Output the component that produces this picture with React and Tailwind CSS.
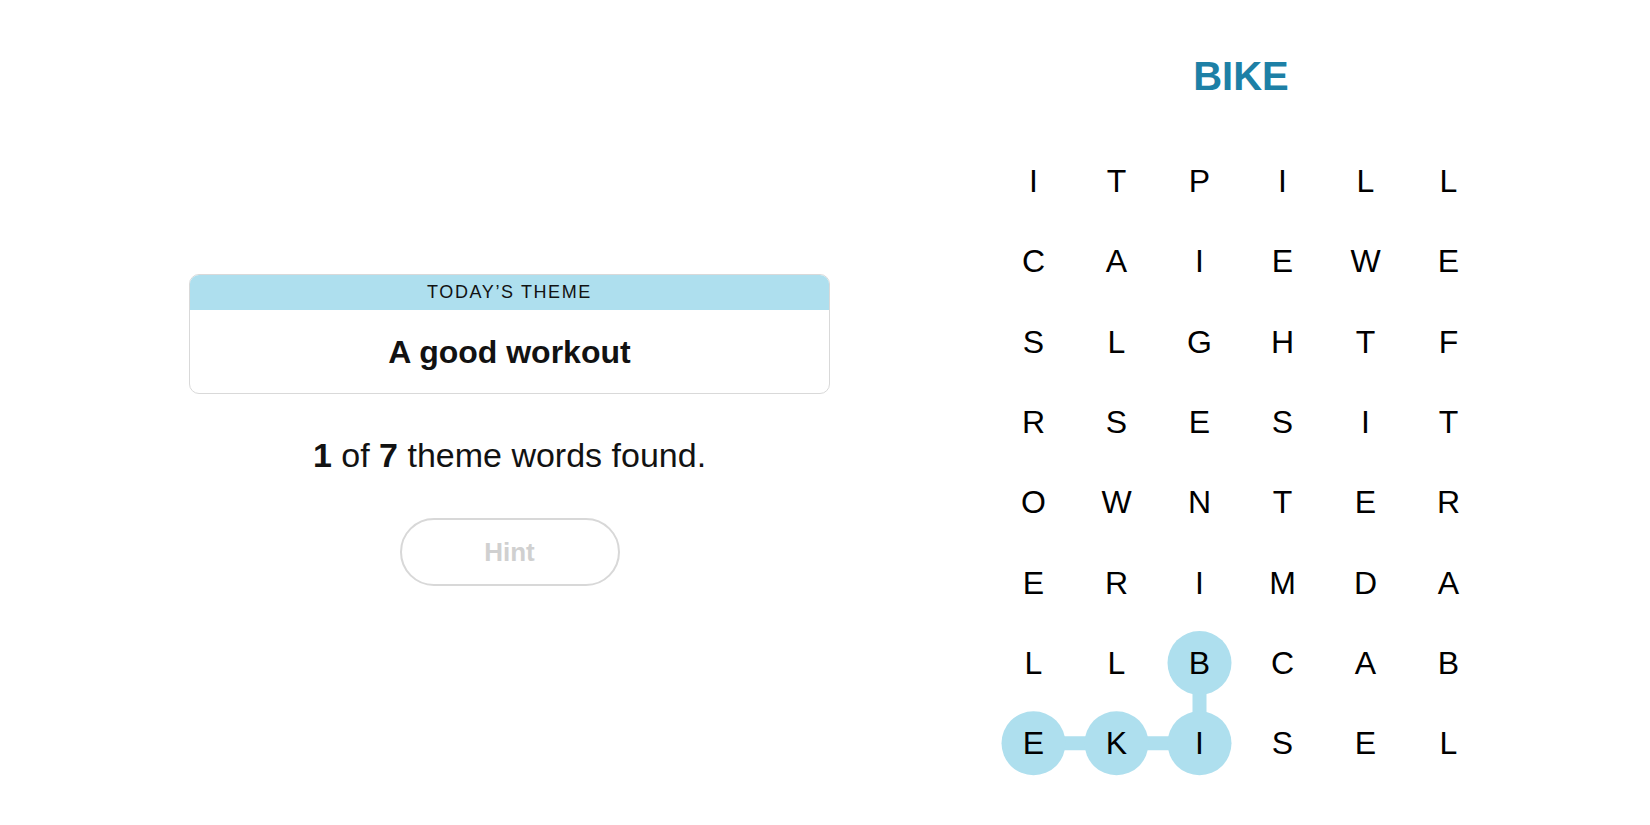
import React from 'react';

const rows = [
  'ITPILL',
  'CAIEWE',
  'SLGHTF',
  'RSESIT',
  'OWNTER',
  'ERIMDA',
  'LLBCAB',
  'EKISEL',
];

// found word path (col, row)
const found = [
  [2, 6],
  [2, 7],
  [1, 7],
  [0, 7],
];

const CELL_W = 83;
const CELL_H = 80.3;

const cx = (c) => CELL_W / 2 + c * CELL_W;
const cy = (r) => CELL_H / 2 + r * CELL_H;

const LetterGrid = () => {
  return (
    <div className="relative w-[498px] h-[643px]">
      <svg className="absolute inset-0" width="498" height="643">
        {found.slice(1).map(([c, r], i) => {
          const [pc, pr] = found[i];
          return (
            <line
              key={i}
              x1={cx(pc)}
              y1={cy(pr)}
              x2={cx(c)}
              y2={cy(r)}
              stroke="#aedfee"
              strokeWidth="14"
            />
          );
        })}
        {found.map(([c, r]) => (
          <circle key={`${c}-${r}`} cx={cx(c)} cy={cy(r)} r="32" fill="#aedfee" />
        ))}
      </svg>
      <div className="relative grid grid-cols-6">
        {rows.map((row, r) =>
          row.split('').map((ch, c) => (
            <div
              key={`${r}-${c}`}
              className="w-[83px] h-[80.3px] flex items-center justify-center text-[32px] text-black"
            >
              {ch}
            </div>
          ))
        )}
      </div>
    </div>
  );
};

export default function App() {
  return (
    <div
      className="w-full h-[825px] bg-white flex"
      style={{ fontFamily: '"Liberation Sans", Arial, sans-serif' }}
    >
      {/* Left column */}
      <div className="w-[641px] ml-[189px] pt-[274px] flex flex-col items-center">
        <div className="w-full h-[120px] border border-[#d9d9d9] rounded-[10px] overflow-hidden flex flex-col">
          <div className="h-[35px] bg-[#aedfee] flex items-center justify-center text-[18px] tracking-[1.6px] text-[#121212] font-medium">
            TODAY’S THEME
          </div>
          <div className="flex-1 flex items-center justify-center text-[32px] font-bold text-[#121212]">
            A good workout
          </div>
        </div>

        <p className="mt-[41px] leading-[40px] text-[34px] text-[#121212]">
          <span className="font-bold">1</span> of <span className="font-bold">7</span> theme words found.
        </p>

        <button className="mt-[43px] w-[220px] h-[68px] rounded-full border-2 border-[#d8d8d8] text-[26px] font-bold text-[#d0d0d0] bg-white">
          Hint
        </button>
      </div>

      {/* Right column */}
      <div className="ml-[162px] w-[498px] pt-[52px] flex flex-col items-center">
        <h1 className="text-[40px] leading-[48px] font-bold text-[#1d80a6]">BIKE</h1>
        <div className="mt-[41px]">
          <LetterGrid />
        </div>
      </div>
    </div>
  );
}
